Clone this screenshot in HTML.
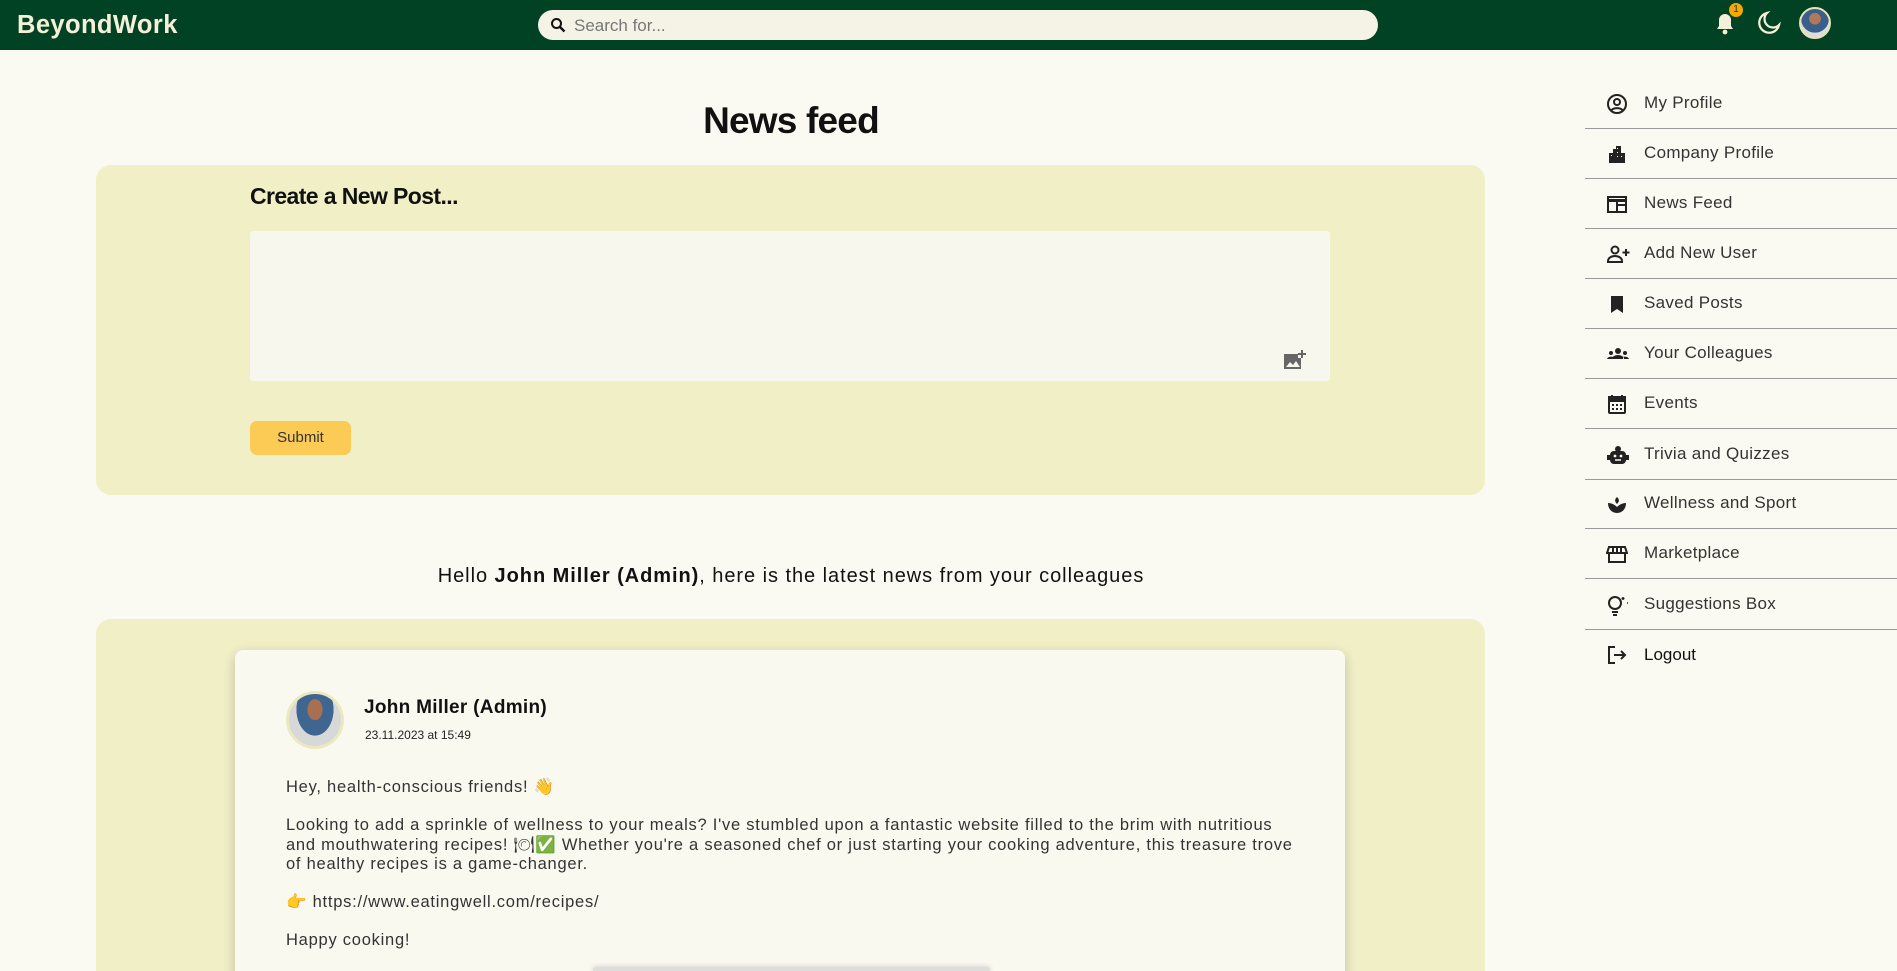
<!DOCTYPE html>
<html><head><meta charset="utf-8"><style>
*{box-sizing:border-box;margin:0;padding:0}
html,body{width:1897px;height:971px;overflow:hidden}
body{background:#fbfaf2;font-family:"Liberation Sans",sans-serif;color:#222;position:relative}
.hdr{position:absolute;left:0;top:0;width:1897px;height:50px;background:#014225}
.logo{position:absolute;left:17px;top:11px;font-size:25.5px;font-weight:bold;color:#f5f1d8;letter-spacing:0.4px}
.search{position:absolute;left:538px;top:10px;width:840px;height:30px;background:#f5f3e6;border-radius:15px}
.search span{position:absolute;left:36px;top:6px;font-size:17px;color:#777}
.abs{position:absolute}
h1{position:absolute;left:591px;width:400px;text-align:center;top:100px;font-size:37px;font-weight:bold;color:#111;letter-spacing:-0.8px}
.card{position:absolute;left:96px;width:1389px;background:#f0efc6;border-radius:15px}
.ta{position:absolute;left:250px;top:231px;width:1080px;height:150px;background:#f8f7ee;border-radius:3px}
.btn{position:absolute;left:250px;top:421px;width:101px;height:34px;background:#fbcb55;border-radius:7px;font-size:15px;text-align:center;line-height:34px;color:#333}
.post{position:absolute;left:235px;top:650px;width:1110px;height:340px;background:#faf9f0;border-radius:8px;box-shadow:0 4px 12px rgba(0,0,0,.2)}
.body{position:absolute;left:286px;font-size:16.5px;color:#333;line-height:19.5px;white-space:nowrap;letter-spacing:0.75px}
.it{position:absolute;left:1585px;width:312px;height:50px;border-bottom:1px solid #999}
.it span{position:absolute;left:59px;top:14px;font-size:17px;color:#333;letter-spacing:.3px}
.it svg{position:absolute;left:21px;top:14px}
</style></head><body>
<div class="hdr">
<div class="logo">BeyondWork</div>
<div class="search"><svg class="abs" style="left:12px;top:7px" width="16" height="16" viewBox="0 0 16 16"><circle cx="6.5" cy="6.5" r="4.5" fill="none" stroke="#111" stroke-width="2"/><path d="M10 10l4.5 4.5" stroke="#111" stroke-width="2.4"/></svg><span>Search for...</span></div>
<svg class="abs" style="left:1713px;top:10px" width="24" height="26" viewBox="0 0 24 26"><path d="M4 19h16l-2-3v-6a6 6 0 0 0-12 0v6z" fill="#f5f1d8"/><circle cx="12" cy="22" r="2.4" fill="#f5f1d8"/></svg>
<div class="abs" style="left:1729px;top:3px;width:14px;height:14px;border-radius:50%;background:#f5a800;color:#333;font-size:10px;text-align:center;line-height:14px">1</div>
<svg class="abs" style="left:1756px;top:10px" width="26" height="26" viewBox="0 0 26 26"><path d="M11 3a10 10 0 1 0 12 12A8 8 0 0 1 11 3z" fill="none" stroke="#f5f1d8" stroke-width="2.2"/></svg>
<div class="abs" style="left:1799px;top:7px;width:32px;height:32px;border-radius:50%;background:radial-gradient(circle at 50% 35%,#b07a5a 0 25%,#3a5f8a 26% 60%,#ddd 61%);border:2px solid #e8e2b8"></div>
</div>
<h1>News feed</h1>
<div class="card" style="top:165px;height:330px"></div>
<div class="abs" style="left:250px;top:183px;font-size:23px;font-weight:bold;color:#111;letter-spacing:-0.6px">Create a New Post...</div>
<div class="ta"><svg class="abs" style="left:1032px;top:118px" width="26" height="24" viewBox="0 0 26 24"><path d="M2 5h14v4h3v11H2z" fill="#666"/><path d="M4 18l4-5 3 3 3-4 4 6z" fill="#f8f7ee"/><path d="M20 1v8M16 5h8" stroke="#666" stroke-width="2"/></svg></div>
<div class="btn">Submit</div>
<div class="abs" style="left:241px;width:1100px;text-align:center;top:565px;font-size:20px;color:#111;letter-spacing:0.95px">Hello <b>John Miller (Admin)</b>, here is the latest news from your colleagues</div>
<div class="card" style="top:619px;height:380px"></div>
<div class="post"></div>
<div class="abs" style="left:286px;top:691px;width:58px;height:58px;border-radius:50%;border:3px solid #ece8bf;background:radial-gradient(ellipse at 50% 30%,#a87050 0 20%,#3f6690 21% 50%,#d8d8d8 51%)"></div>
<div class="abs" style="left:364px;top:697px;font-size:19px;font-weight:bold;color:#111;letter-spacing:0.3px">John Miller (Admin)</div>
<div class="abs" style="left:365px;top:728px;font-size:12px;color:#222">23.11.2023 at 15:49</div>
<div class="body" style="top:778px">Hey, health-conscious friends! 👋</div>
<div class="body" style="top:816px">Looking to add a sprinkle of wellness to your meals? I've stumbled upon a fantastic website filled to the brim with nutritious<br>and mouthwatering recipes! 🍽✅ Whether you're a seasoned chef or just starting your cooking adventure, this treasure trove<br>of healthy recipes is a game-changer.</div>
<div class="body" style="top:893px">👉 https://www.eatingwell.com/recipes/</div>
<div class="body" style="top:931px">Happy cooking!</div>
<div class="abs" style="left:593px;top:967px;width:397px;height:6px;background:#ddd;border-radius:3px;box-shadow:0 0 6px rgba(0,0,0,.2)"></div>

<div class="it" style="top:79px"><svg width="22" height="22" viewBox="0 0 22 22"><circle cx="11" cy="11" r="9" fill="none" stroke="#222" stroke-width="2"/><circle cx="11" cy="9" r="3" fill="none" stroke="#222" stroke-width="2"/><path d="M5.5 17a7 5 0 0 1 11 0" fill="none" stroke="#222" stroke-width="2"/></svg><span>My Profile</span></div>
<div class="it" style="top:129px"><svg width="22" height="22" viewBox="0 0 22 22"><path d="M3 20V10h4V6h3V3h5v7h4v10z" fill="#222"/><path d="M5 12h1v1H5zM11 5h1v1h-1zM11 9h1v1h-1zM11 13h1v1h-1zM15 13h1v1h-1z" fill="#fff"/></svg><span>Company Profile</span></div>
<div class="it" style="top:179px"><svg width="22" height="22" viewBox="0 0 22 22"><rect x="2" y="4" width="18" height="15" fill="none" stroke="#222" stroke-width="2"/><path d="M2 6h18v3H2zM11 11h8v2h-8z" fill="#222"/><path d="M11 9v10" stroke="#222" stroke-width="2"/></svg><span>News Feed</span></div>
<div class="it" style="top:229px"><svg width="24" height="22" viewBox="0 0 24 22"><circle cx="9" cy="7" r="3.5" fill="none" stroke="#222" stroke-width="2"/><path d="M2 19v-1a7 5 0 0 1 14 0v1z" fill="none" stroke="#222" stroke-width="2"/><path d="M20 6v7M16.5 9.5h7" stroke="#222" stroke-width="2"/></svg><span>Add New User</span></div>
<div class="it" style="top:279px"><svg width="22" height="22" viewBox="0 0 22 22"><path d="M5 3h12v17l-6-4-6 4z" fill="#222"/></svg><span>Saved Posts</span></div>
<div class="it" style="top:329px"><svg width="24" height="22" viewBox="0 0 24 22"><circle cx="12" cy="8" r="3" fill="#222"/><circle cx="5" cy="10" r="2" fill="#222"/><circle cx="19" cy="10" r="2" fill="#222"/><path d="M6 16a6 4 0 0 1 12 0zM1 16a4 3 0 0 1 6-2v2zM23 16a4 3 0 0 0-6-2v2z" fill="#222"/></svg><span>Your Colleagues</span></div>
<div class="it" style="top:379px"><svg width="22" height="22" viewBox="0 0 22 22"><rect x="3" y="4" width="16" height="16" rx="1" fill="none" stroke="#222" stroke-width="2"/><path d="M3 4h16v4H3zM6 2v3M16 2v3" stroke="#222" stroke-width="2" fill="#222"/><path d="M6 11h2v2H6zM10 11h2v2h-2zM14 11h2v2h-2zM6 15h2v2H6zM10 15h2v2h-2zM14 15h2v2h-2z" fill="#222"/></svg><span>Events</span></div>
<div class="it" style="top:430px"><svg width="24" height="22" viewBox="0 0 24 22"><circle cx="12" cy="5" r="3" fill="#222"/><rect x="4" y="7" width="16" height="13" rx="4" fill="#222"/><rect x="1" y="11" width="3" height="5" fill="#222"/><rect x="20" y="11" width="3" height="5" fill="#222"/><circle cx="9" cy="12" r="1.4" fill="#fbfaf2"/><circle cx="15" cy="12" r="1.4" fill="#fbfaf2"/><path d="M9 16h6" stroke="#fbfaf2" stroke-width="1.5"/></svg><span>Trivia and Quizzes</span></div>
<div class="it" style="top:479px"><svg width="22" height="22" viewBox="0 0 22 22"><path d="M11 4c2 2 3 4 0 7-3-3-2-5 0-7z" fill="#222"/><path d="M2 10c4 0 7 2 9 4 2-2 5-4 9-4 0 6-4 10-9 10S2 16 2 10z" fill="#222"/></svg><span>Wellness and Sport</span></div>
<div class="it" style="top:529px"><svg width="22" height="22" viewBox="0 0 22 22"><path d="M3 4h16l2 6H1z" fill="none" stroke="#222" stroke-width="2"/><path d="M7 4v6M11 4v6M15 4v6" stroke="#222" stroke-width="2"/><rect x="3" y="10" width="16" height="9" fill="none" stroke="#222" stroke-width="2"/></svg><span>Marketplace</span></div>
<div class="it" style="top:580px"><svg width="24" height="24" viewBox="0 0 24 24"><circle cx="9" cy="9" r="6" fill="none" stroke="#222" stroke-width="2"/><path d="M6 18h6M7 21h4" stroke="#222" stroke-width="2"/><path d="M17 3v3M15.5 4.5h3M21 9h1" stroke="#222" stroke-width="1.5"/></svg><span>Suggestions Box</span></div>
<div class="abs" style="left:1585px;top:630px;width:312px;height:50px"><svg class="abs" style="left:21px;top:14px" width="22" height="22" viewBox="0 0 22 22"><path d="M9 3H3v16h6" fill="none" stroke="#222" stroke-width="2"/><path d="M8 11h11M15 7l4 4-4 4" fill="none" stroke="#222" stroke-width="2"/></svg><span class="abs" style="left:59px;top:15px;font-size:17px;color:#111">Logout</span></div>
</body></html>
